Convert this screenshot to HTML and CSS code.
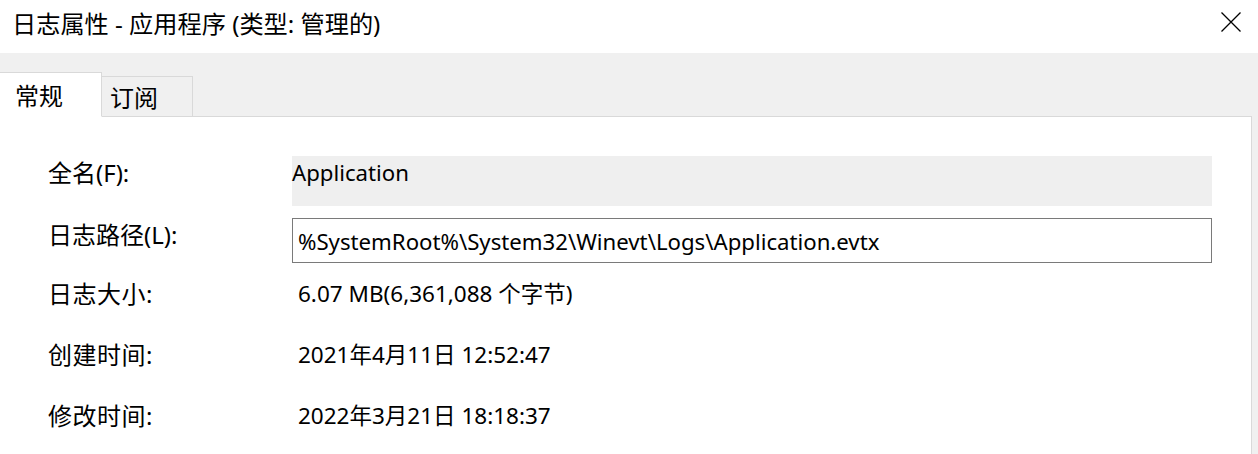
FILE: index.html
```html
<!DOCTYPE html>
<html lang="zh-CN">
<head>
<meta charset="utf-8">
<title>日志属性 - 应用程序</title>
<link rel="stylesheet" href="styles.css">
</head>
<body>
<div class="window">
  <div class="titlebar">
    <div class="title">日志属性 - 应用程序 (类型: 管理的)</div>
    <div class="close" aria-label="关闭">
      <svg width="20" height="20" viewBox="0 0 20 20"><path d="M0.5 0.5 L19.5 19.5 M19.5 0.5 L0.5 19.5" stroke="#000" stroke-width="1.3" fill="none"/></svg>
    </div>
  </div>
  <div class="tabstrip">
    <div class="tab active">常规</div>
    <div class="tab">订阅</div>
    <div class="tabfill"></div>
  </div>
  <div class="panel">
    <div class="row row-name">
      <div class="label">全名(F):</div>
      <div class="value box-gray">Application</div>
    </div>
    <div class="row row-path">
      <div class="label">日志路径(L):</div>
      <div class="value box-input">%SystemRoot%\System32\Winevt\Logs\Application.evtx</div>
    </div>
    <div class="row row-text">
      <div class="label">日志大小:</div>
      <div class="value plain">6.07 MB(6,361,088 个字节)</div>
    </div>
    <div class="row row-text">
      <div class="label">创建时间:</div>
      <div class="value plain">2021年4月11日 12:52:47</div>
    </div>
    <div class="row row-text">
      <div class="label">修改时间:</div>
      <div class="value plain">2022年3月21日 18:18:37</div>
    </div>
  </div>
</div>
</body>
</html>
```

FILE: styles.css
```css
* { box-sizing: border-box; }
html, body {
  margin: 0;
  padding: 0;
  width: 1258px;
  height: 454px;
  overflow: hidden;
  background: #f0f0f0;
  font-family: "Noto Sans", "Noto Sans CJK SC", sans-serif;
  color: #000;
}
.window {
  display: flex;
  flex-direction: column;
  height: 454px;
}
.titlebar {
  height: 53px;
  background: #fff;
  display: flex;
  align-items: center;
  justify-content: space-between;
  padding-left: 12px;
  padding-right: 17px;
}
.title {
  font-size: 24.2px;
  line-height: 30px;
  margin-top: -6px;
}
.close {
  width: 20px;
  height: 20px;
  margin-top: -10px;
}
.close svg { display: block; }
.tabstrip {
  display: flex;
  align-items: flex-end;
  height: 64px;
  padding-top: 19px;
}
.tab {
  font-size: 24px;
  line-height: 30px;
  border-top: 1px solid #d9d9d9;
  border-right: 1px solid #d9d9d9;
  border-bottom: 1px solid #d9d9d9;
  height: 41px;
  width: 91px;
  padding-left: 8px;
  padding-top: 6px;
}
.tab.active {
  background: #fff;
  height: 45px;
  width: 102px;
  padding-left: 15px;
  padding-top: 8px;
  border-bottom-color: #fff;
}
.tabfill {
  flex: 1;
  height: 1px;
  background: #d9d9d9;
  margin-right: 6px;
}
.panel {
  flex: 1;
  background: #fff;
  border-right: 1px solid #d9d9d9;
  margin-right: 6px;
  padding-top: 39px;
  padding-left: 48px;
  display: flex;
  flex-direction: column;
}
.row {
  display: flex;
  align-items: flex-start;
}
.label {
  width: 244px;
  font-size: 24px;
  line-height: 30px;
  padding-top: 2px;
}
.value {
  font-size: 22.2px;
  line-height: 30px;
}
.box-gray {
  width: 920px;
  height: 50px;
  background: #efefef;
  padding-top: 2px;
}
.row-path { margin-top: 12px; }
.box-input {
  width: 920px;
  height: 45px;
  border: 1px solid #7a7a7a;
  padding-top: 8px;
  padding-left: 5px;
}
.row-text { margin-top: 31px; }
.row-path + .row-text { margin-top: 16px; }
.row-text .label { padding-top: 0; letter-spacing: 0.5px; }
.plain {
  padding-left: 6px;
  font-size: 22.5px;
}
```
